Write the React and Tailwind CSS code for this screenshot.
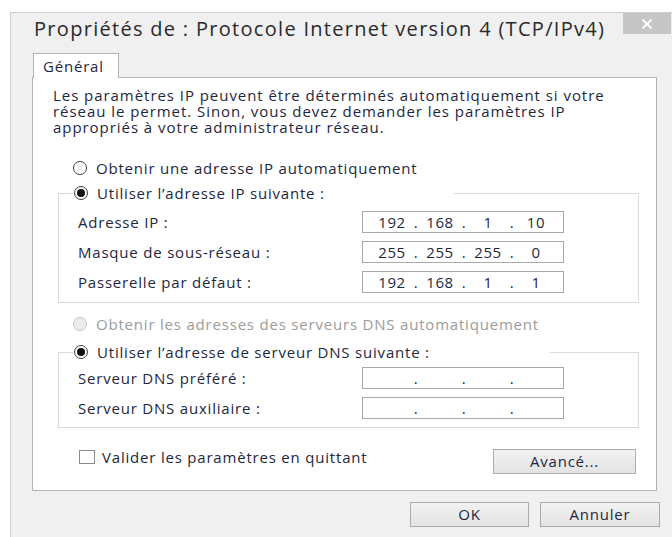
const font = { fontFamily: '"Open Sans", "Noto Sans", "DejaVu Sans", sans-serif' }

function Radio({ checked, disabled }) {
  return (
    <span
      className={
        'flex h-[14px] w-[14px] shrink-0 items-center justify-center rounded-full border ' +
        (disabled ? 'border-[#c4c4c4] bg-[#ececec]' : 'border-[#3c3c3c] bg-white')
      }
    >
      {checked && <span className="h-[8px] w-[8px] rounded-full bg-[#111]" />}
    </span>
  )
}

function IpField({ parts }) {
  // quatre octets + trois points, comme le contrôle IP de Windows
  const cells = parts || ['', '', '', '']
  return (
    <div className="flex h-[22px] w-[202px] items-center border border-[#a9a9a9] bg-white pl-[11px] text-[15px] text-[#1e2740]">
      {cells.map((p, i) => (
        <div key={i} className="flex items-center">
          <span className="w-[36px] text-center tracking-[0.6px]">{p}</span>
          {i < 3 && <span className="w-[12px] text-center">.</span>}
        </div>
      ))}
    </div>
  )
}

function Row({ label, parts }) {
  return (
    <div className="flex h-[22px] items-center">
      <span className="w-[284px] text-[15px] tracking-[0.8px] text-[#1e2740]">{label}</span>
      <IpField parts={parts} />
    </div>
  )
}

function Button({ children, className }) {
  return (
    <button
      className={
        'flex h-[25px] items-center justify-center border border-[#acacac] bg-gradient-to-b from-[#f2f2f2] to-[#e3e3e3] text-[15px] tracking-[0.8px] text-[#1e2740] ' +
        className
      }
    >
      {children}
    </button>
  )
}

export default function App() {
  return (
    <div className="h-[537px] w-[672px] overflow-hidden bg-white pl-[10px] pt-[12px]" style={font}>
      <div className="flex h-[525px] w-[662px] flex-col border-l border-t border-[#cfcfcf] bg-[#f0f0f0]">
        {/* barre de titre */}
        <div className="flex h-[40px] items-start justify-between">
          <span className="whitespace-nowrap pl-[23px] pt-[1px] text-[20px] tracking-[1.3px] text-[#2a2a2a]">
            Propriétés de : Protocole Internet version 4 (TCP/IPv4)
          </span>
          <div className="mr-[1px] flex h-[21px] w-[48px] shrink-0 items-center justify-center bg-[#c6c6c6]">
            <svg width="12" height="10" viewBox="0 0 12 10">
              <path d="M1.5 0.5 L10.5 9.5 M10.5 0.5 L1.5 9.5" stroke="#fff" strokeWidth="1.8" />
            </svg>
          </div>
        </div>

        <div className="ml-[21px]">
          {/* onglet */}
          <div className="relative z-10 -mb-px ml-[1px] flex h-[25px] w-[86px] items-center border border-b-0 border-[#b4b4b4] bg-white pl-[9px] text-[15px] tracking-[0.8px] text-[#1e2740]">
            Général
          </div>

          {/* panneau */}
          <div className="flex h-[414px] w-[625px] flex-col border border-[#b4b4b4] bg-white text-[15px] tracking-[0.8px]">
            <p className="whitespace-nowrap pl-[20px] pt-[9px] leading-[16px] tracking-[0.95px] text-[#1e2740]">
              Les paramètres IP peuvent être déterminés automatiquement si votre
              <br />
              réseau le permet. Sinon, vous devez demander les paramètres IP
              <br />
              appropriés à votre administrateur réseau.
            </p>

            <label className="ml-[40px] mt-[25px] flex h-[16px] items-center gap-[9px] text-[#1e2740]">
              <Radio />
              Obtenir une adresse IP automatiquement
            </label>

            <fieldset className="ml-[25px] mt-[9px] w-[581px] border border-[#dadada] pb-[9px] pl-[19px]">
              <legend className="-ml-[5px] flex h-[16px] w-[381px] items-center gap-[9px] pl-[1px] text-[#1e2740]">
                <Radio checked />
                Utiliser l’adresse IP suivante :
              </legend>
              <div className="flex flex-col gap-[8px] pt-[10px]">
                <Row label="Adresse IP :" parts={['192', '168', '1', '10']} />
                <Row label="Masque de sous-réseau :" parts={['255', '255', '255', '0']} />
                <Row label="Passerelle par défaut :" parts={['192', '168', '1', '1']} />
              </div>
            </fieldset>

            <label className="ml-[40px] mt-[13px] flex h-[16px] items-center gap-[9px] text-[#9b9b9b]">
              <Radio disabled />
              Obtenir les adresses des serveurs DNS automatiquement
            </label>

            <fieldset className="ml-[25px] mt-[12px] w-[581px] border border-[#dadada] pb-[8px] pl-[19px]">
              <legend className="-ml-[5px] flex h-[16px] w-[477px] items-center gap-[9px] pl-[1px] text-[#1e2740]">
                <Radio checked />
                Utiliser l’adresse de serveur DNS suivante :
              </legend>
              <div className="flex flex-col gap-[8px] pt-[7px]">
                <Row label="Serveur DNS préféré :" />
                <Row label="Serveur DNS auxiliaire :" />
              </div>
            </fieldset>

            <div className="mt-[21px] flex items-start justify-between pl-[46px] pr-[20px]">
              <label className="flex h-[16px] items-center gap-[7px] text-[#1e2740]">
                <span className="h-[14px] w-[16px] border border-[#8a8a8a] bg-white" />
                Valider les paramètres en quittant
              </label>
              <Button className="w-[143px]">Avancé...</Button>
            </div>
          </div>
        </div>

        {/* boutons du bas */}
        <div className="mr-[12px] mt-[11px] flex justify-end gap-[11px]">
          <Button className="w-[119px]">OK</Button>
          <Button className="w-[120px]">Annuler</Button>
        </div>
      </div>
    </div>
  )
}
